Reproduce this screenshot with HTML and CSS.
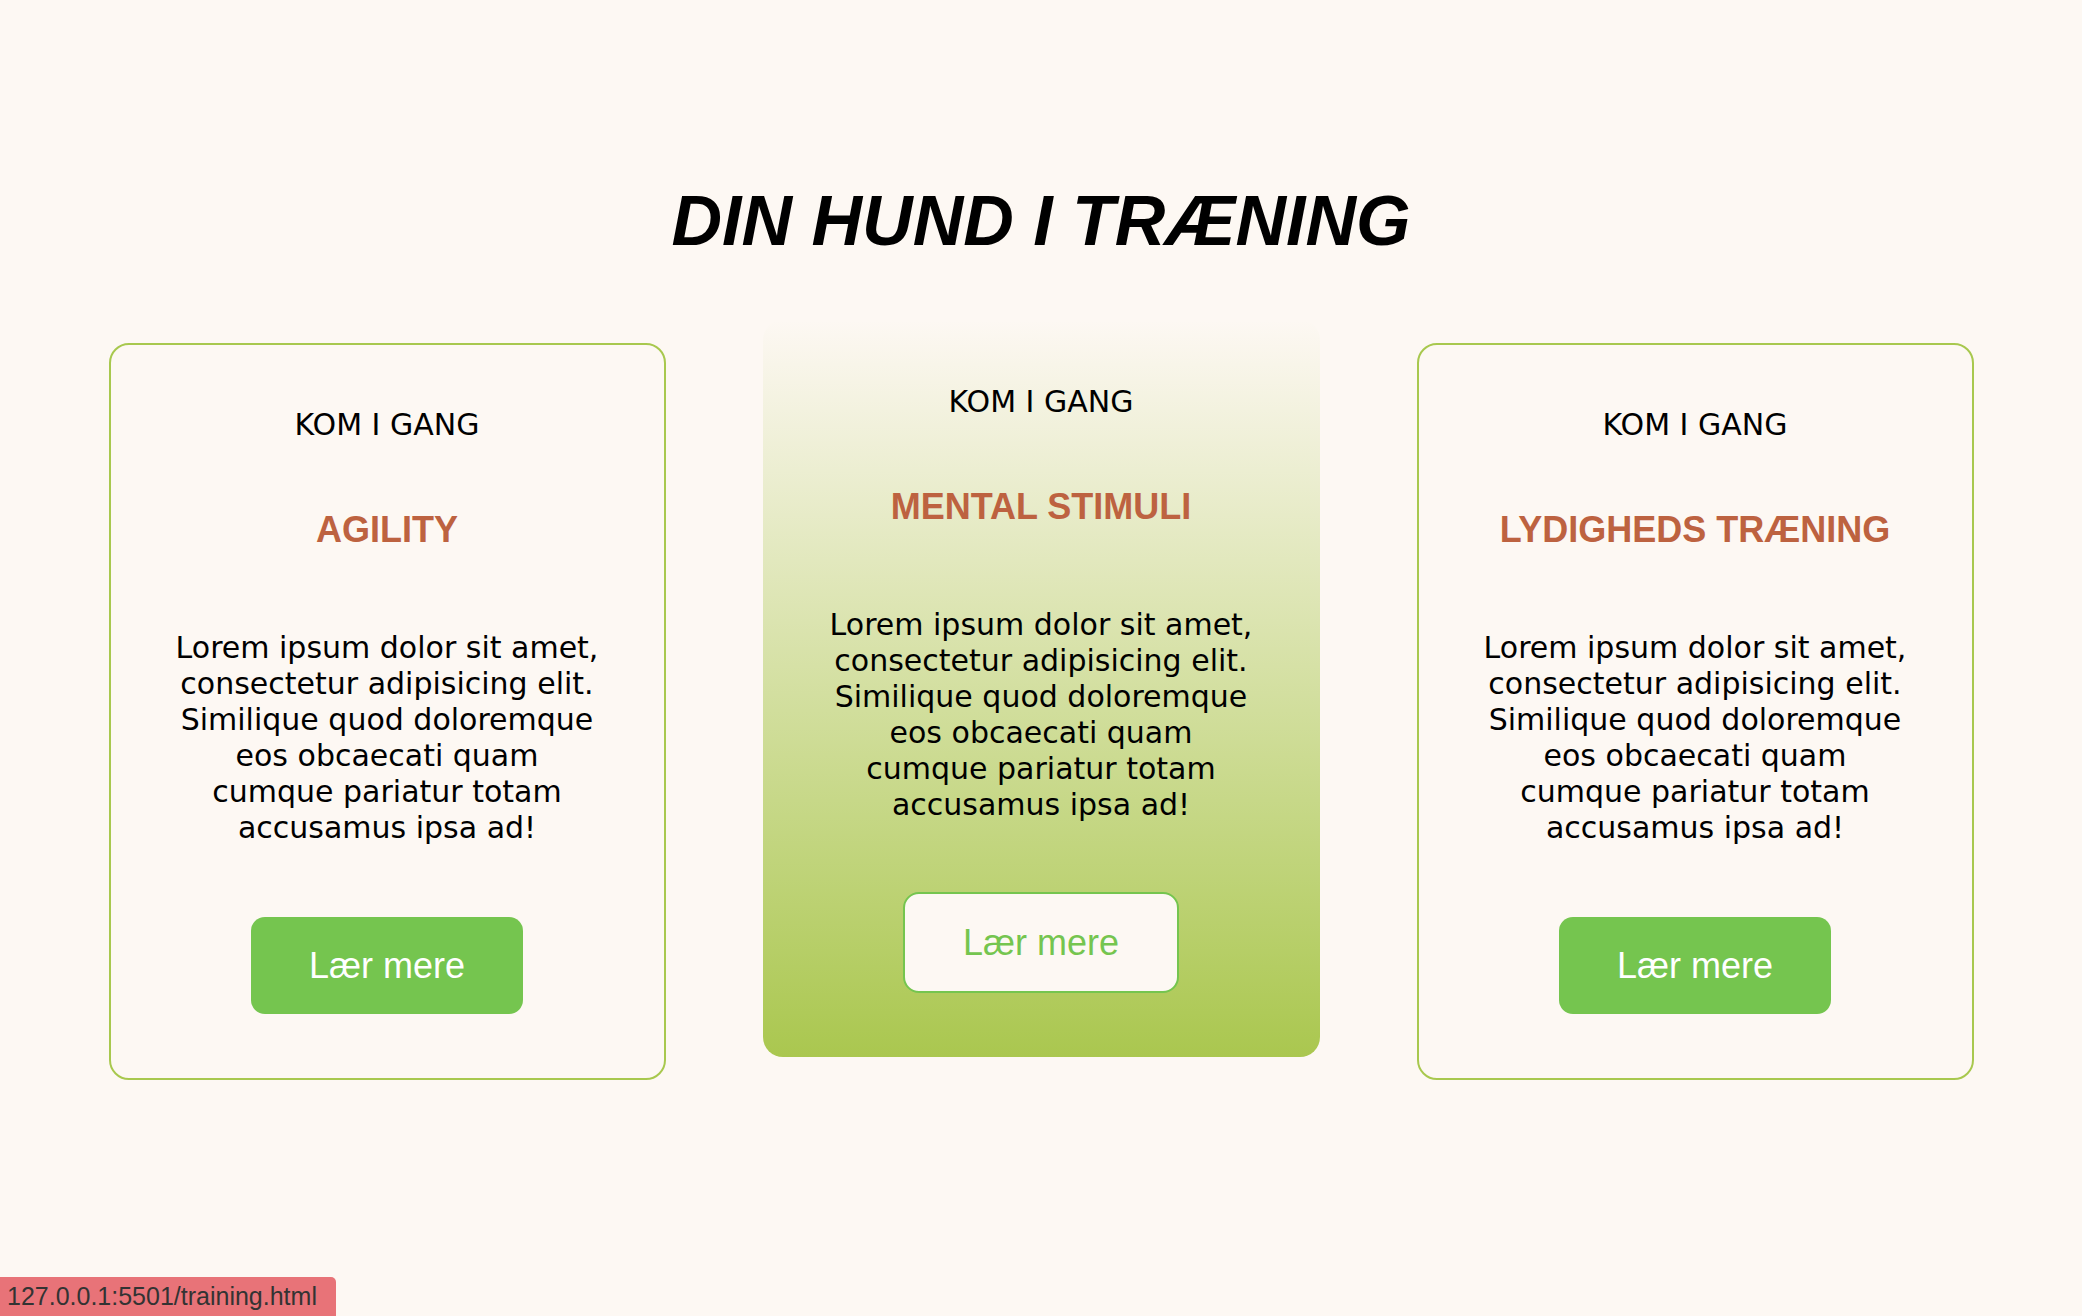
FILE: index.html
```html
<!DOCTYPE html>
<html lang="da">
<head>
<meta charset="utf-8">
<title>Træning</title>
<link rel="stylesheet" href="styles.css">
</head>
<body>
<main class="training">
  <h1 class="title">DIN HUND I TRÆNING</h1>
  <section class="cards">
    <article class="card">
      <p class="kicker">KOM I GANG</p>
      <h3 class="card-title">AGILITY</h3>
      <p class="card-text">Lorem ipsum dolor sit amet, consectetur adipisicing elit. Similique quod doloremque eos obcaecati quam cumque pariatur totam accusamus ipsa ad!</p>
      <a class="btn" href="training.html">Lær mere</a>
    </article>
    <article class="card card-featured">
      <p class="kicker">KOM I GANG</p>
      <h3 class="card-title">MENTAL STIMULI</h3>
      <p class="card-text">Lorem ipsum dolor sit amet, consectetur adipisicing elit. Similique quod doloremque eos obcaecati quam cumque pariatur totam accusamus ipsa ad!</p>
      <a class="btn btn-outline" href="training.html">Lær mere</a>
    </article>
    <article class="card">
      <p class="kicker">KOM I GANG</p>
      <h3 class="card-title">LYDIGHEDS TRÆNING</h3>
      <p class="card-text">Lorem ipsum dolor sit amet, consectetur adipisicing elit. Similique quod doloremque eos obcaecati quam cumque pariatur totam accusamus ipsa ad!</p>
      <a class="btn" href="training.html">Lær mere</a>
    </article>
  </section>
</main>
<div class="status">127.0.0.1:5501/training.html</div>
</body>
</html>
```

FILE: styles.css
```css
html, body {
  margin: 0;
  padding: 0;
}

body {
  background: #fdf8f3;
  color: #000;
  font-family: "DejaVu Sans", Verdana, sans-serif;
  min-height: 100vh;
}

.training {
  padding-top: 181px;
}

.title {
  margin: 0;
  font-family: "Liberation Sans", Arial, sans-serif;
  font-size: 70px;
  font-weight: 700;
  font-style: italic;
  line-height: 80px;
  text-align: center;
  color: #000;
}

.cards {
  margin-top: 82px;
  display: grid;
  grid-template-columns: repeat(3, 557px);
  column-gap: 97px;
  justify-content: center;
}

.card {
  box-sizing: border-box;
  height: 737px;
  border: 2px solid #a8c84e;
  border-radius: 20px;
  padding-top: 62px;
  display: flex;
  flex-direction: column;
  align-items: center;
  text-align: center;
}

.card-featured {
  border-color: transparent;
  background: linear-gradient(to bottom, #fdf8f3 0%, #aac74f 100%);
  background-origin: border-box;
  transform: translateY(-23px);
}

.kicker {
  margin: 0;
  font-size: 30px;
  line-height: 36px;
}

.card-title {
  margin: 65px 0 0;
  font-family: "Liberation Sans", Arial, sans-serif;
  font-size: 36px;
  font-weight: 700;
  line-height: 43px;
  color: #bd6240;
}

.card-text {
  margin: 79px 0 0;
  width: 430px;
  font-size: 30px;
  line-height: 36px;
}

.btn {
  margin-top: 71px;
  display: inline-block;
  padding: 28px 58px;
  border-radius: 14px;
  background: #75c54f;
  color: #fff;
  font-family: "Liberation Sans", Arial, sans-serif;
  font-size: 36px;
  line-height: 41px;
  text-decoration: none;
}

.btn-outline {
  margin-top: 69px;
  border: 2px solid #75c54f;
  border-radius: 16px;
  background: #fdf8f3;
  color: #75c54f;
}

.status {
  position: fixed;
  left: 0;
  bottom: 0;
  height: 39px;
  padding: 0 19px 0 7px;
  background: #e87378;
  color: #333;
  border-top-right-radius: 5px;
  font-family: "Liberation Sans", Arial, sans-serif;
  font-size: 25px;
  line-height: 39px;
}
```
